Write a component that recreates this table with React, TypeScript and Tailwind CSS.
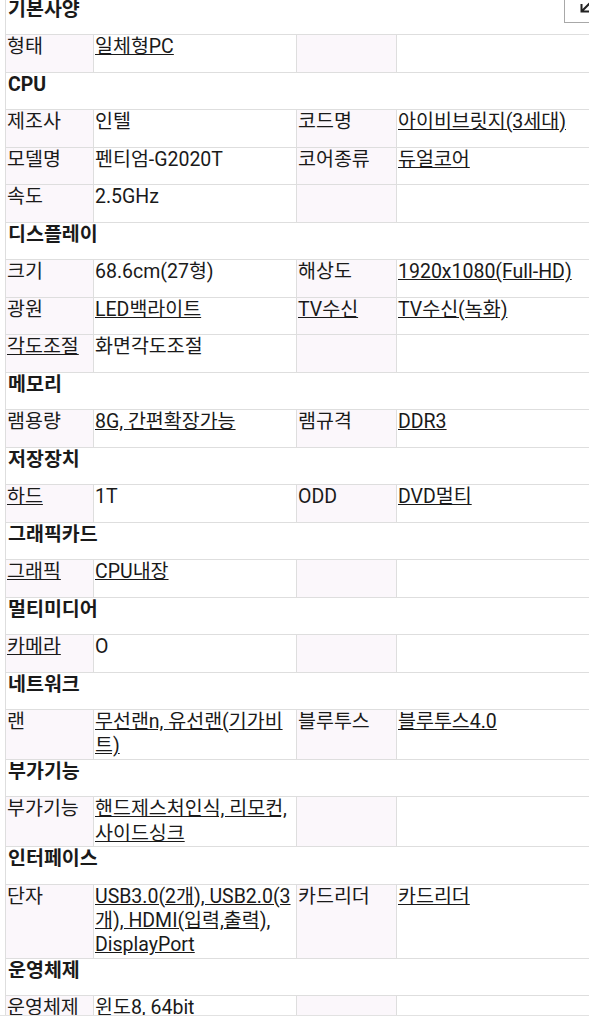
import React from 'react';

// '*' prefix = underlined link text
type SpecRow = { head: string } | { cells: [string, string, string, string] };

const specs: SpecRow[] = [
  { head: '기본사양' },
  { cells: ['형태', '*일체형PC', '', ''] },
  { head: 'CPU' },
  { cells: ['제조사', '인텔', '코드명', '*아이비브릿지(3세대)'] },
  { cells: ['모델명', '펜티엄-G2020T', '코어종류', '*듀얼코어'] },
  { cells: ['속도', '2.5GHz', '', ''] },
  { head: '디스플레이' },
  { cells: ['크기', '68.6cm(27형)', '해상도', '*1920x1080(Full-HD)'] },
  { cells: ['광원', '*LED백라이트', '*TV수신', '*TV수신(녹화)'] },
  { cells: ['*각도조절', '화면각도조절', '', ''] },
  { head: '메모리' },
  { cells: ['램용량', '*8G, 간편확장가능', '램규격', '*DDR3'] },
  { head: '저장장치' },
  { cells: ['*하드', '1T', 'ODD', '*DVD멀티'] },
  { head: '그래픽카드' },
  { cells: ['*그래픽', '*CPU내장', '', ''] },
  { head: '멀티미디어' },
  { cells: ['*카메라', 'O', '', ''] },
  { head: '네트워크' },
  { cells: ['랜', '*무선랜n, 유선랜(기가비트)', '블루투스', '*블루투스4.0'] },
  { head: '부가기능' },
  { cells: ['부가기능', '*핸드제스처인식, 리모컨, 사이드싱크', '', ''] },
  { head: '인터페이스' },
  { cells: ['단자', '*USB3.0(2개), USB2.0(3개), HDMI(입력,출력), DisplayPort', '카드리더', '*카드리더'] },
  { head: '운영체제' },
  { cells: ['운영체제', '*윈도8, 64bit', '', ''] },
];

function CellText({ value }: { value: string }) {
  if (value.startsWith('*')) {
    return (
      <a href="#" className="underline">
        {value.slice(1)}
      </a>
    );
  }
  return <>{value}</>;
}

export default function App() {
  return (
    <div className="relative w-[589px] h-[1024px] overflow-hidden bg-white text-[19.5px] leading-[24.4px] text-[#1a1a1a] font-['Roboto','Noto_Sans_CJK_KR',sans-serif]">
      <div className="ml-[5px] -mt-[2.5px] w-[640px] border-l border-[#dedede]">
        {specs.map((row, i) =>
          'head' in row ? (
            <div key={i} className="min-h-[37.5px] border-b border-[#dedede] pl-[2px] font-bold">
              {row.head}
            </div>
          ) : (
            <div key={i} className="grid grid-cols-[88px_203px_100px_1fr] border-b border-[#dedede]">
              {row.cells.map((c, j) => (
                <div
                  key={j}
                  className={
                    j % 2 === 0
                      ? 'min-h-[36.5px] border-r border-[#dedede] bg-[#fbf7fb] pl-px'
                      : 'min-h-[36.5px] border-r border-[#dedede] bg-white pl-px pr-[2px]'
                  }
                >
                  <CellText value={c} />
                </div>
              ))}
            </div>
          )
        )}
      </div>

      {/* collapse button, cut off at the top right */}
      <div className="absolute left-[564px] top-[-13px] h-[36px] w-[36px] border border-[#a8a8a8] bg-white">
        <svg className="absolute left-[14px] top-[10px]" width="16" height="16" viewBox="0 0 16 16" fill="none">
          <path d="M15 1L3 13M2.5 6v7.5H10" stroke="#222" strokeWidth="2" />
        </svg>
      </div>

      {/* bottom bar edge */}
      <div className="absolute bottom-0 left-0 right-0 h-[9px] border-t border-[#e2e2e2] bg-white" />
    </div>
  );
}
